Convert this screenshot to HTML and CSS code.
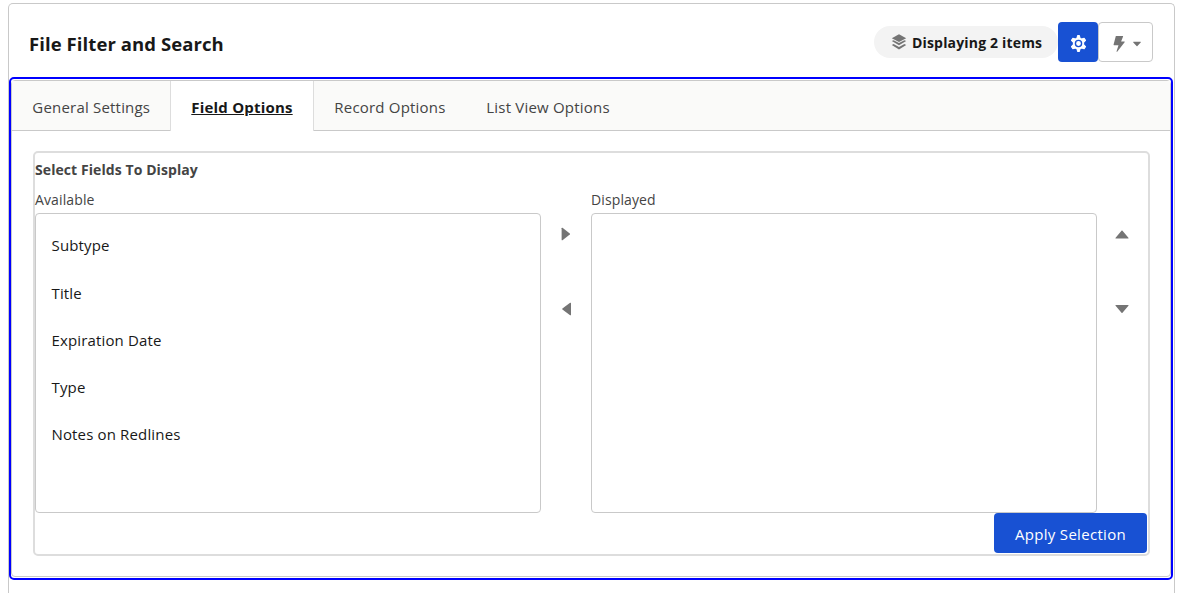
FILE: index.html
```html
<!DOCTYPE html>
<html lang="en">
<head>
<meta charset="utf-8">
<title>File Filter and Search</title>
<link rel="stylesheet" href="styles.css">
</head>
<body>
<section class="card">
  <header class="card-header">
    <h1 class="title">File Filter and Search</h1>
    <div class="actions">
      <span class="badge">
        <svg class="icon-layers" viewBox="0 0 16 16" width="16" height="16"><path d="M8 .3 15.2 4.2 8 8 .8 4.2Z"/><path d="M.8 7.1 2.6 6.2 8 9.1l5.4-2.9 1.8.9L8 11.3Z"/><path d="M.8 10.9l1.8-.9L8 12.9l5.4-2.9 1.8.9L8 15.4Z"/></svg>
        <span class="badge-text">Displaying 2 items</span>
      </span>
      <button class="btn-gear" aria-label="Settings">
        <svg viewBox="0 0 16 16" width="17" height="17"><path fill="#fff" stroke="#fff" stroke-width="1" stroke-linejoin="round" d="M7.200.5h1.600l.7 2.400 1.300.8 2.500-.7 1.300 2-1.800 1.900v2.200l1.800 1.900-1.300 2-2.500-.7-1.300.8-.7 2.400H7.200l-.7-2.400-1.300-.8-2.500.7-1.300-2 1.800-1.900V6.900L1.400 5l1.300-2 2.500.7 1.300-.8Z"/><circle cx="8" cy="8" r="2.900" fill="none" stroke="#1851d3" stroke-width="1.300"/></svg>
      </button>
      <button class="btn-bolt" aria-label="Actions">
        <svg class="icon-bolt" viewBox="0 0 12 16" width="12" height="16"><path d="M3.100.1h6.700c.3 0 .4.200.3.500L8.100 5.400h3.100c.5 0 .7.400.4.800L4.200 15.700c-.3.300-.8.100-.7-.3l2-6.100H1.100c-.5 0-.7-.3-.5-.7L2.700.4c.1-.2.200-.3.400-.3Z"/></svg>
        <svg viewBox="0 0 8 6" width="8" height="6"><path d="M.5.800h7c.4 0 .5.300.2.600L4.400 5c-.3.300-.5.300-.8 0L.3 1.400C0 1.100.1.800.5.800Z"/></svg>
      </button>
    </div>
  </header>
  <div class="focus-frame">
    <div class="tabset">
      <nav class="tabs">
        <a class="tab tab-general"><span>General Settings</span></a>
        <a class="tab tab-field active"><span>Field Options</span></a>
        <a class="tab tab-record"><span>Record Options</span></a>
        <a class="tab tab-list"><span>List View Options</span></a>
      </nav>
      <div class="panel">
        <div class="fieldset">
          <h2 class="legend"><span>Select Fields To Display</span></h2>
          <div class="picker">
            <div class="column">
              <div class="label"><span>Available</span></div>
              <ul class="listbox">
                <li><span>Subtype</span></li>
                <li><span>Title</span></li>
                <li><span>Expiration Date</span></li>
                <li><span>Type</span></li>
                <li><span>Notes on Redlines</span></li>
              </ul>
            </div>
            <div class="arrows">
              <svg viewBox="0 0 14 14" width="14" height="14"><path d="M2.600 1.200c0-.5.500-.7.900-.4l7.300 5.700c.3.300.3.600 0 .9l-7.300 5.800c-.4.300-.9.100-.9-.4Z"/></svg>
              <svg viewBox="0 0 14 14" width="14" height="14"><path d="M12 1.200c0-.5-.5-.7-.9-.4L3.400 6.500c-.3.300-.3.600 0 .9l7.700 5.800c.4.300.9.100.9-.4Z"/></svg>
            </div>
            <div class="column">
              <div class="label"><span>Displayed</span></div>
              <ul class="listbox"></ul>
            </div>
            <div class="arrows">
              <svg viewBox="0 0 14 14" width="14" height="14"><path d="M1 11.600c-.6 0-.7-.5-.4-.9l5.900-7c.3-.4.700-.4 1 0l5.900 7c.3.400.2.900-.4.900Z"/></svg>
              <svg viewBox="0 0 14 14" width="14" height="14"><path d="M1 2.900c-.6 0-.7.500-.4.900l5.900 7c.3.400.7.400 1 0l5.900-7c.3-.4.200-.9-.4-.9Z"/></svg>
            </div>
          </div>
          <div class="footer"><button class="apply"><span>Apply Selection</span></button></div>
        </div>
      </div>
    </div>
  </div>
</section>
</body>
</html>
```
FILE: styles.css
```css
* { box-sizing: border-box; }
body {
  margin: 0;
  padding: 3px 6px 0 8px;
  background: #fff;
  color: #181818;
  font-family: "Open Sans", "Noto Sans", sans-serif;
  font-size: 15px;
}
svg { display: block; fill: #747474; }
button { margin: 0; padding: 0; font: inherit; }
span { white-space: nowrap; }

.card {
  height: 590px;
  border: 1px solid #c9c9c9;
  border-bottom: 0;
  border-radius: 5px 5px 0 0;
}
.card-header {
  display: flex;
  justify-content: space-between;
  height: 73px;
  padding: 18px 21px 0 20px;
}
.title {
  margin: 0;
  font-size: 18.5px;
  font-weight: 700;
  line-height: 43px;
  letter-spacing: .08px;
}
.actions { display: flex; }
.badge {
  display: flex;
  align-items: center;
  width: 184px;
  height: 32px;
  margin-top: 4px;
  padding-left: 17px;
  border-radius: 16px;
  background: #f3f3f3;
  font-size: 14px;
  font-weight: 700;
  letter-spacing: .17px;
}
.badge-text { margin-left: 5px; }
.btn-gear {
  display: grid;
  place-items: center;
  width: 40px;
  height: 40px;
  padding: 3px 0 0 1px;
  border: 0;
  border-radius: 4px;
  background: #1851d3;
}
.btn-bolt {
  display: flex;
  align-items: center;
  gap: 8px;
  width: 55px;
  height: 40px;
  padding: 4px 0 0 14px;
  border: 1px solid #c9c9c9;
  border-radius: 4px;
  background: #fff;
}

.focus-frame {
  width: 1164px;
  height: 503px;
  padding-top: 1px;
  border: 2px solid #00f;
  border-radius: 5px;
}
.tabset {
  height: 497px;
  border: 1px solid #c9c9c9;
  border-radius: 4px;
}
.tabs {
  display: flex;
  height: 50px;
  border-bottom: 1px solid #c9c9c9;
  background: #fafaf9;
  color: #444;
  letter-spacing: .2px;
}
.tab { height: 49px; padding-left: 20.3px; line-height: 52px; }
.tab-general { width: 158px; }
.tab-field { width: 144px; letter-spacing: .2px; }
.tab-record { width: 152px; }
.tab.active {
  height: 50px;
  border: solid #ddd;
  border-width: 0 1px;
  background: #fff;
  color: #181818;
  font-weight: 700;
  text-decoration: underline;
}

.panel { padding: 20px 20px 0 21px; }
.fieldset {
  height: 405px;
  border: 2px solid #ddd;
  border-radius: 5px;
}
.legend {
  margin: 0;
  height: 36px;
  color: #444;
  font-size: 14px;
  font-weight: 700;
  line-height: 33px;
  letter-spacing: .08px;
}
.picker { display: flex; }
.column { width: 506px; }
.label { height: 24px; color: #444; font-size: 14px; line-height: 22px; letter-spacing: .12px; }
.listbox {
  height: 300px;
  margin: 0;
  padding: 8px 15.5px;
  border: 1px solid #c9c9c9;
  border-radius: 4px;
  list-style: none;
  letter-spacing: .15px;
}
.listbox li { height: 47.25px; line-height: 47px; }
.listbox li:first-child { height: 48px; }
.listbox li:nth-child(2) { height: 46.5px; }
.arrows {
  display: flex;
  flex-direction: column;
  align-items: center;
  gap: 61px;
  width: 50px;
  padding-top: 38px;
}
.footer { display: flex; justify-content: flex-end; padding-right: 1px; }
.apply {
  width: 153px;
  height: 40px;
  padding-top: 2px;
  border: 0;
  border-radius: 4px;
  background: #1851d3;
  color: #fff;
  letter-spacing: .3px;
}
```
